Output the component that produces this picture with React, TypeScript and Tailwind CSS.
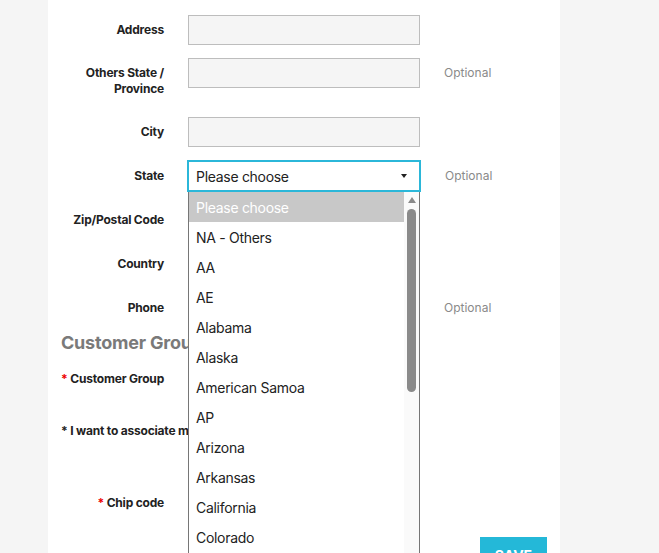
import React from 'react';

const STATES = [
  'Please choose',
  'NA - Others',
  'AA',
  'AE',
  'Alabama',
  'Alaska',
  'American Samoa',
  'AP',
  'Arizona',
  'Arkansas',
  'California',
  'Colorado',
  'Connecticut',
];

function Label({ children, required }: { children: React.ReactNode; required?: boolean }) {
  return (
    <div className="w-[116px] shrink-0 text-right text-[12px] font-bold leading-[16px] tracking-[-0.2px] text-[#222]">
      {required && <span className="text-[#e00]">* </span>}
      {children}
    </div>
  );
}

function Input() {
  return <div className="h-[30px] w-[232px] shrink-0 border border-[#bdbdbd] bg-[#f5f5f5]" />;
}

function Optional() {
  return <div className="ml-[24px] text-[12px] text-[#8a8a8a]">Optional</div>;
}

function Row({ label, optional, className = '' }: { label: string; optional?: boolean; className?: string }) {
  return (
    <div className={`flex items-center ${className}`}>
      <Label>{label}</Label>
      <div className="ml-[24px]">
        <Input />
      </div>
      {optional && <Optional />}
    </div>
  );
}

export default function App() {
  return (
    <div className="h-[553px] overflow-hidden bg-[#f5f5f5] font-['Inter',sans-serif]">
      <div className="relative ml-[48px] h-[553px] w-[512px] overflow-hidden bg-white pt-[15px]">
        <Row label="Address" />

        <div className="mt-[13px] flex h-[45px] items-start">
          <div className="pt-[7px]">
            <Label>Others State / Province</Label>
          </div>
          <div className="ml-[24px]">
            <Input />
          </div>
          <div className="pt-[6px]">
            <Optional />
          </div>
        </div>

        <Row label="City" className="mt-[14px]" />

        {/* State select (open) */}
        <div className="mt-[13px] flex items-center">
          <Label>State</Label>
          <div className="relative ml-[23px]">
            <div className="flex h-[32px] w-[234px] items-center justify-between border-2 border-[#2bb7d9] bg-white pl-[7px] pr-[12px] text-[14px] tracking-[-0.3px] text-[#222]">
              <span>Please choose</span>
              <span className="h-0 w-0 border-x-[3.5px] border-t-[4px] border-x-transparent border-t-[#222]" />
            </div>

            <div className="absolute left-[1px] top-[32px] z-10 flex h-[380px] w-[232px] border-x border-[#767676] bg-white">
              <ul className="flex-1">
                {STATES.map((s, i) => (
                  <li
                    key={s}
                    className={`flex h-[30px] items-center pl-[7px] text-[14px] tracking-[-0.3px] ${
                      i === 0 ? 'bg-[#c8c8c8] text-white' : 'text-[#222]'
                    }`}
                  >
                    {s}
                  </li>
                ))}
              </ul>
              <div className="flex w-[15px] flex-col items-center bg-[#fafafa] pt-[5px]">
                <span className="h-0 w-0 border-x-[4px] border-b-[6px] border-x-transparent border-b-[#8a8a8a]" />
                <div className="mt-[6px] h-[183px] w-[9px] rounded-full bg-[#8a8a8a]" />
              </div>
            </div>
          </div>
          <Optional />
        </div>

        <Row label="Zip/Postal Code" className="mt-[13px]" />
        <Row label="Country" className="mt-[14px]" />
        <Row label="Phone" optional className="mt-[14px]" />

        <h2 className="mt-[8px] pl-[13px] text-[18px] font-bold leading-[24px] tracking-[-0.2px] text-[#7a7a7a]">
          Customer Group
        </h2>

        <div className="mt-[16px] flex items-center">
          <Label required>Customer Group</Label>
        </div>

        <div className="mt-[36px] pl-[13px] text-[12px] font-bold leading-[16px] tracking-[-0.2px] text-[#222]">
          * I want to associate my pet&apos;s microchip with recent scans
        </div>

        <div className="mt-[56px] flex items-center">
          <Label required>Chip code</Label>
        </div>

        <div className="mt-[26px] flex justify-end pr-[13px]">
          <button className="h-[30px] w-[67px] bg-[#24b8d8] pt-[6px] text-[14px] font-bold text-white">SAVE</button>
        </div>
      </div>
    </div>
  );
}
